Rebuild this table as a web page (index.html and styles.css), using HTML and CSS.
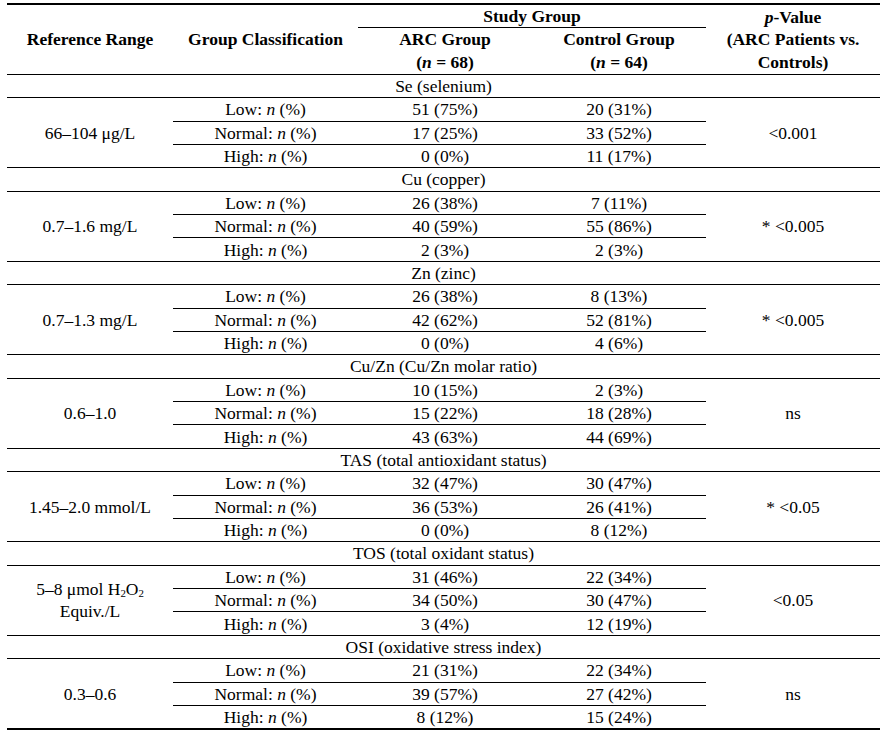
FILE: index.html
```html
<!DOCTYPE html>
<html lang="en">
<head>
<meta charset="utf-8">
<title>Trace elements and oxidative status</title>
<link rel="stylesheet" href="styles.css">
</head>
<body>
<div class="page">
<table class="data">
<thead>
<tr>
<th rowspan="3" class="hd-bottom">Reference Range</th>
<th rowspan="3" class="hd-bottom">Group Classification</th>
<th colspan="2" class="study">Study Group</th>
<th rowspan="3" class="hd-bottom pval"><i>p</i>-Value<br>(ARC Patients vs.<br>Controls)</th>
</tr>
<tr><th>ARC Group</th><th>Control Group</th></tr>
<tr><th class="hd-bottom">(<i>n</i> = 68)</th><th class="hd-bottom">(<i>n</i> = 64)</th></tr>
</thead>
<tbody>
<tr class="sec"><td colspan="5">Se (selenium)</td></tr>
<tr class="mid"><td rowspan="3" class="span">66–104 μg/L</td><td>Low: <i>n</i> (%)</td><td>51 (75%)</td><td>20 (31%)</td><td rowspan="3" class="span">&lt;0.001</td></tr>
<tr class="mid"><td>Normal: <i>n</i> (%)</td><td>17 (25%)</td><td>33 (52%)</td></tr>
<tr class="last"><td>High: <i>n</i> (%)</td><td>0 (0%)</td><td>11 (17%)</td></tr>

<tr class="sec"><td colspan="5">Cu (copper)</td></tr>
<tr class="mid"><td rowspan="3" class="span">0.7–1.6 mg/L</td><td>Low: <i>n</i> (%)</td><td>26 (38%)</td><td>7 (11%)</td><td rowspan="3" class="span">* &lt;0.005</td></tr>
<tr class="mid"><td>Normal: <i>n</i> (%)</td><td>40 (59%)</td><td>55 (86%)</td></tr>
<tr class="last"><td>High: <i>n</i> (%)</td><td>2 (3%)</td><td>2 (3%)</td></tr>

<tr class="sec"><td colspan="5">Zn (zinc)</td></tr>
<tr class="mid"><td rowspan="3" class="span">0.7–1.3 mg/L</td><td>Low: <i>n</i> (%)</td><td>26 (38%)</td><td>8 (13%)</td><td rowspan="3" class="span">* &lt;0.005</td></tr>
<tr class="mid"><td>Normal: <i>n</i> (%)</td><td>42 (62%)</td><td>52 (81%)</td></tr>
<tr class="last"><td>High: <i>n</i> (%)</td><td>0 (0%)</td><td>4 (6%)</td></tr>

<tr class="sec"><td colspan="5">Cu/Zn (Cu/Zn molar ratio)</td></tr>
<tr class="mid"><td rowspan="3" class="span">0.6–1.0</td><td>Low: <i>n</i> (%)</td><td>10 (15%)</td><td>2 (3%)</td><td rowspan="3" class="span">ns</td></tr>
<tr class="mid"><td>Normal: <i>n</i> (%)</td><td>15 (22%)</td><td>18 (28%)</td></tr>
<tr class="last"><td>High: <i>n</i> (%)</td><td>43 (63%)</td><td>44 (69%)</td></tr>

<tr class="sec"><td colspan="5">TAS (total antioxidant status)</td></tr>
<tr class="mid"><td rowspan="3" class="span">1.45–2.0 mmol/L</td><td>Low: <i>n</i> (%)</td><td>32 (47%)</td><td>30 (47%)</td><td rowspan="3" class="span">* &lt;0.05</td></tr>
<tr class="mid"><td>Normal: <i>n</i> (%)</td><td>36 (53%)</td><td>26 (41%)</td></tr>
<tr class="last"><td>High: <i>n</i> (%)</td><td>0 (0%)</td><td>8 (12%)</td></tr>

<tr class="sec"><td colspan="5">TOS (total oxidant status)</td></tr>
<tr class="mid"><td rowspan="3" class="span">5–8 μmol H<sub>2</sub>O<sub>2</sub><br>Equiv./L</td><td>Low: <i>n</i> (%)</td><td>31 (46%)</td><td>22 (34%)</td><td rowspan="3" class="span">&lt;0.05</td></tr>
<tr class="mid"><td>Normal: <i>n</i> (%)</td><td>34 (50%)</td><td>30 (47%)</td></tr>
<tr class="last"><td>High: <i>n</i> (%)</td><td>3 (4%)</td><td>12 (19%)</td></tr>

<tr class="sec"><td colspan="5">OSI (oxidative stress index)</td></tr>
<tr class="mid"><td rowspan="3" class="span">0.3–0.6</td><td>Low: <i>n</i> (%)</td><td>21 (31%)</td><td>22 (34%)</td><td rowspan="3" class="span">ns</td></tr>
<tr class="mid"><td>Normal: <i>n</i> (%)</td><td>39 (57%)</td><td>27 (42%)</td></tr>
<tr class="last"><td>High: <i>n</i> (%)</td><td>8 (12%)</td><td>15 (24%)</td></tr>
</tbody>
</table>
</div>
</body>
</html>
```
FILE: styles.css
```css
html, body {
  margin: 0;
  padding: 0;
  background: #ffffff;
}

.page {
  padding: 3px 0 0 7px;
}

.data {
  width: 873px;
  border-collapse: collapse;
  table-layout: fixed;
  font-family: "Liberation Serif", "Times New Roman", serif;
  font-size: 17.5px;
  color: #000000;
  border-top: 2px solid #000000;
  border-bottom: 2px solid #000000;
}

.data th,
.data td {
  padding: 0;
  text-align: center;
  vertical-align: middle;
  line-height: 22px;
  height: 23.375px;
  box-sizing: border-box;
  white-space: nowrap;
}

.data th {
  font-weight: bold;
}

.data th:nth-child(1) { width: 166px; }

.data thead tr:first-child th:nth-child(2) { width: 185px; }
.data thead tr:first-child th.pval { width: 174px; }

.data .study {
  border-bottom: 1px solid #000000;
}

.data .hd-bottom {
  border-bottom: 1px solid #000000;
}

.data .pval {
  line-height: 22.5px;
}

.data .sec td,
.data .mid td,
.data .last td {
  border-bottom: 1px solid #000000;
}

.data sub {
  font-size: 0.62em;
  line-height: 0;
  vertical-align: -0.15em;
}
```
